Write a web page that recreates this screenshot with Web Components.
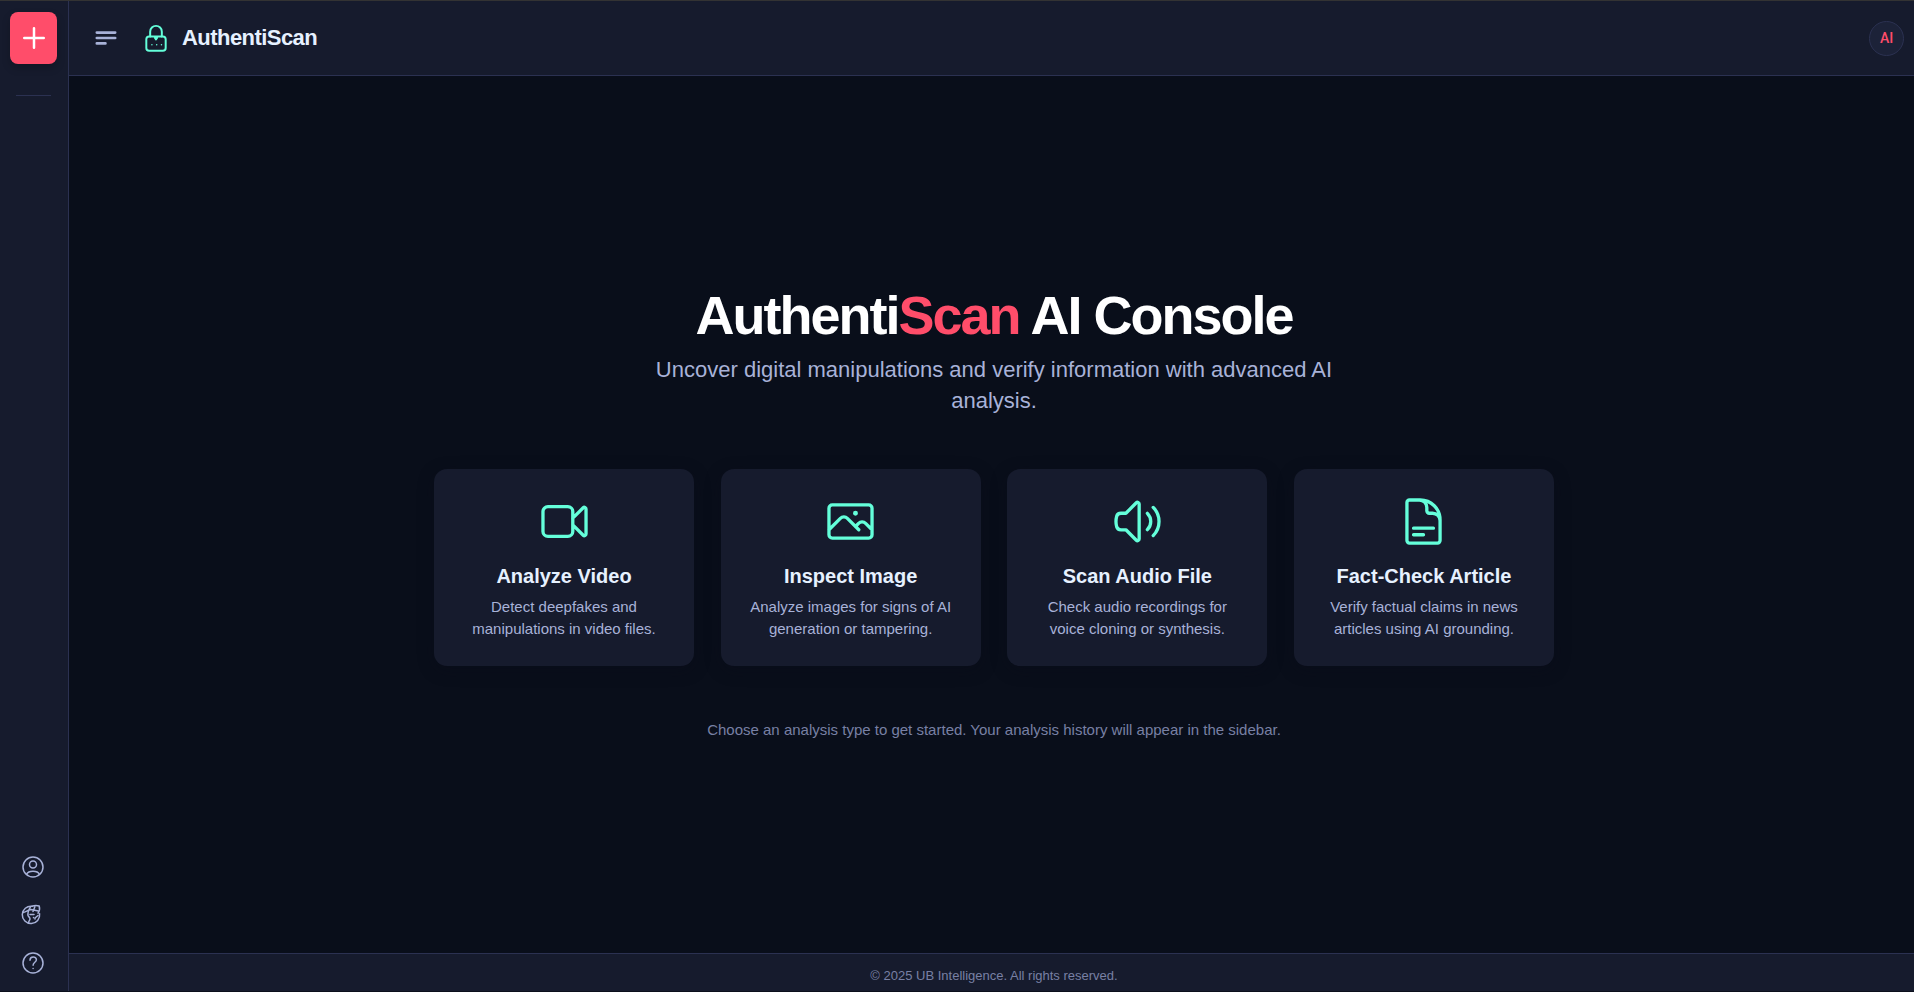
<!DOCTYPE html>
<html lang="en">
<head>
<meta charset="utf-8">
<title>AuthentiScan AI Console</title>
<style>
  html, body { height: 100%; }
  body {
    margin: 0;
    background: #090e1a;
    color: #e6f1ff;
    font-family: "Liberation Sans", Arial, sans-serif;
    --panel: #161b2d;
    --line: #2b3151;
    --mint: #64ffda;
    --red: #ff4d6a;
    --soft: #a8b2d8;
    --dim: #7880a4;
  }
</style>
</head>
<body>
<auth-app></auth-app>

<script>
class BaseElement extends HTMLElement {
  constructor() {
    super();
    this.attachShadow({ mode: "open" }).innerHTML = this.constructor.markup;
  }
}

const ICONS = {
  plus: `<path d="M12 4.200v15.600M4.200 12h15.600"/>`,
  menu: `<path d="M3.500 7h17M3.500 12h17M3.500 17h8"/>`,
  lock: `<rect x="3.700" y="10.700" width="16.600" height="12.200" rx="2.400"/><path d="M7 10.700V6.600a5 5 0 0 1 10 0V10.700M11 11.800h2L12 13.200z"/><path d="M8.500 17.700v.1M12.600 17.700v.1M16.700 17.700v.1" stroke-width="1.300"/>`,
  video: `<path d="m15.750 10.500 4.720-4.720a.75.75 0 0 1 1.280.53v11.380a.75.75 0 0 1-1.280.53l-4.720-4.720M4.500 18.750h9a2.250 2.250 0 0 0 2.250-2.250v-9a2.250 2.250 0 0 0-2.250-2.250h-9A2.250 2.250 0 0 0 2.250 7.500v9a2.250 2.250 0 0 0 2.250 2.250Z"/>`,
  image: `<path d="m2.250 15.750 5.159-5.159a2.250 2.250 0 0 1 3.182 0l5.159 5.159m-1.500-1.500 1.409-1.409a2.250 2.250 0 0 1 3.182 0l2.909 2.909m-18 3.750h16.500a1.500 1.500 0 0 0 1.500-1.500V6a1.500 1.500 0 0 0-1.500-1.500H3.750A1.500 1.500 0 0 0 2.250 6v12a1.500 1.500 0 0 0 1.500 1.500Zm10.500-11.250h.008v.008h-.008V8.250Zm.375 0a.375.375 0 1 1-.75 0 .375.375 0 0 1 .75 0Z"/>`,
  audio: `<path d="M19.114 5.636a9 9 0 0 1 0 12.728M16.463 8.288a5.250 5.250 0 0 1 0 7.424M6.750 8.250l4.720-4.720a.75.75 0 0 1 1.280.53v15.880a.75.75 0 0 1-1.280.53l-4.720-4.720H4.510c-.88 0-1.704-.507-1.938-1.354A9.009 9.009 0 0 1 2.250 12c0-.83.112-1.633.322-2.396C2.806 8.756 3.630 8.250 4.510 8.250H6.750Z"/>`,
  article: `<path d="M19.500 14.250v-2.625a3.375 3.375 0 0 0-3.375-3.375h-1.500A1.125 1.125 0 0 1 13.500 7.125v-1.500a3.375 3.375 0 0 0-3.375-3.375H8.250M7.500 15h9M7.500 18H12M10.500 2.250H5.625c-.621 0-1.125.504-1.125 1.125v17.250c0 .621.504 1.125 1.125 1.125h12.750c.621 0 1.125-.504 1.125-1.125V11.250a9 9 0 0 0-9-9Z"/>`,
  user: `<circle cx="12" cy="12" r="10"/><circle cx="12" cy="9.500" r="3.500"/><path d="M5.500 19.300c2-4 11-4 13 0"/>`,
  globe: `<path d="M11 3.200a8.700 8.700 0 1 0 7.600 7.500"/><path d="M11 3.200c2-.8 5-1 7.200-.2.600 2 .4 5-1.200 7.200M1.800 9.500c3 0 4.500-2.500 8-3L17.500 8M9.500 3.800C7.500 7 6.500 9 7 12.500c.5 1.500 2 1.500 2 3.500-.2 1.500-1.500 2-1.500 4M14 3.500l-2 5M9 11.500h4M12.500 14.500v.3M17 12.500l-3 2.500v1"/>`,
  help: `<circle cx="12" cy="12" r="10"/><path d="M9 9.300c0-4.400 6.400-4.400 6.400-.5 0 2.600-3.300 2.400-3.300 5.400M12.100 17.400v.2"/>`
};

customElements.define("auth-icon", class extends HTMLElement {
  constructor() {
    super();
    this.attachShadow({ mode: "open" });
  }
  connectedCallback() {
    this.shadowRoot.innerHTML = `
      <style>
        :host { display: block; width: 24px; height: 24px; flex: none; }
        svg { display: block; width: 100%; height: 100%; overflow: visible; fill: none;
          stroke: currentColor; stroke-width: var(--stroke, 1.5);
          stroke-linecap: round; stroke-linejoin: round; }
      </style>
      <svg viewBox="0 0 24 24" aria-hidden="true">${ICONS[this.getAttribute("name")]}</svg>`;
  }
});

customElements.define("auth-sidebar", class extends BaseElement {
  static markup = `
    <style>
      :host { display: flex; flex-direction: column; justify-content: space-between;
        box-sizing: border-box; width: 69px; padding: 11px 11px 12px 10px;
        background: var(--panel); border-right: 1px solid var(--line); }
      .top, nav { display: flex; flex-direction: column; align-items: center; }
      button { border: 0; padding: 0; background: none; color: var(--soft);
        display: grid; place-items: center; cursor: pointer; }
      .new { width: 47px; height: 52px; border-radius: 8px; background: var(--red); color: #fff;
        box-shadow: 0 4px 8px rgba(0, 0, 0, .2); --stroke: 2; }
      .new auth-icon { width: 30px; height: 30px; }
      hr { width: 35px; height: 1px; margin: 31px 0 0; border: 0; background: var(--line); }
      nav { gap: 16px; padding-right: 1px; }
      nav button { width: 32px; height: 32px; }
    </style>
    <div class="top">
      <button class="new" aria-label="New analysis"><auth-icon name="plus"></auth-icon></button>
      <hr>
    </div>
    <nav aria-label="Account">
      <button aria-label="Profile"><auth-icon name="user"></auth-icon></button>
      <button aria-label="Language"><auth-icon name="globe"></auth-icon></button>
      <button aria-label="Help"><auth-icon name="help"></auth-icon></button>
    </nav>`;
});

customElements.define("auth-header", class extends BaseElement {
  static markup = `
    <style>
      :host { display: flex; align-items: center; box-sizing: border-box; height: 75px;
        padding: 0 10px 0 24px; background: var(--panel); border-bottom: 1px solid var(--line); }
      button { border: 0; padding: 0; background: none; cursor: pointer; }
      .menu { color: var(--soft); --stroke: 2.4; }
      .menu auth-icon { width: 26px; height: 26px; }
      .logo { width: 28px; height: 28px; margin: 0 12px 0 23px; color: var(--mint); --stroke: 1.7; }
      span { font-size: 22px; line-height: 28px; font-weight: 700; letter-spacing: -0.025em; }
      .avatar { box-sizing: border-box; width: 35px; height: 35px; margin-left: auto;
        border: 1px solid var(--line); border-radius: 50%; background: #1c2238;
        color: var(--red); font: 500 14px/20px "Roboto", sans-serif; }
    </style>
    <button class="menu" aria-label="Toggle sidebar"><auth-icon name="menu"></auth-icon></button>
    <auth-icon class="logo" name="lock"></auth-icon>
    <span>AuthentiScan</span>
    <button class="avatar">AI</button>`;
});

customElements.define("auth-card", class extends BaseElement {
  static markup = `
    <style>
      :host { display: block; }
      button { display: flex; flex-direction: column; align-items: center; box-sizing: border-box;
        width: 100%; height: 100%; padding: 26px 24px; border: 0; border-radius: 13px;
        background: var(--panel); color: inherit; font-family: inherit; text-align: center;
        box-shadow: 0 4px 16px rgba(10, 12, 24, .4); cursor: pointer; }
      ::slotted(auth-icon) { width: 53px; height: 53px; color: var(--mint); }
      .title { margin-top: 15px; font-size: 20px; line-height: 26px; font-weight: 700; }
      .text { margin-top: 7px; font-size: 15px; line-height: 22px; color: var(--soft); }
    </style>
    <button>
      <slot name="icon"></slot>
      <span class="title"><slot name="title"></slot></span>
      <span class="text"><slot></slot></span>
    </button>`;
});

customElements.define("auth-welcome", class extends BaseElement {
  static markup = `
    <style>
      :host { display: flex; flex-direction: column; align-items: center; justify-content: center;
        text-align: center; }
      h1 { margin: 0; font-size: 54px; line-height: 60px; font-weight: 700; color: #fff;
        letter-spacing: -2px; }
      em { font-style: normal; color: var(--red); }
      .lead { max-width: 700px; margin: 9px 0 0; font-size: 22px; line-height: 31px; color: var(--soft); }
      .cards { display: grid; grid-template-columns: repeat(4, 260px); justify-content: space-between;
        width: 1120px; max-width: 100%; margin: 53px 0; }
      .hint { margin: 0; font-size: 15px; line-height: 22px; color: var(--dim); }
    </style>
    <h1>Authenti<em>Scan</em> AI Console</h1>
    <p class="lead">Uncover digital manipulations and verify information with advanced AI analysis.</p>
    <div class="cards">
      <auth-card><auth-icon slot="icon" name="video"></auth-icon><span slot="title">Analyze Video</span>Detect deepfakes and manipulations in video files.</auth-card>
      <auth-card><auth-icon slot="icon" name="image"></auth-icon><span slot="title">Inspect Image</span>Analyze images for signs of AI generation or tampering.</auth-card>
      <auth-card><auth-icon slot="icon" name="audio"></auth-icon><span slot="title">Scan Audio File</span>Check audio recordings for voice cloning or synthesis.</auth-card>
      <auth-card><auth-icon slot="icon" name="article"></auth-icon><span slot="title">Fact-Check Article</span>Verify factual claims in news articles using AI grounding.</auth-card>
    </div>
    <p class="hint">Choose an analysis type to get started. Your analysis history will appear in the sidebar.</p>`;
});

customElements.define("auth-app", class extends BaseElement {
  static markup = `
    <style>
      :host { display: grid; grid-template-columns: auto 1fr; box-sizing: border-box;
        min-height: 100%; border-top: 1px solid #333; border-bottom: 1px solid #0b0f1c; }
      .page { display: grid; grid-template-rows: auto 1fr auto; min-width: 0; }
      main { display: grid; padding: 0 0 3px 5px; }
      footer { padding: 12px 0 5px 5px; background: var(--panel); border-top: 1px solid var(--line);
        text-align: center; font-size: 13px; line-height: 20px; color: var(--dim); }
    </style>
    <auth-sidebar></auth-sidebar>
    <div class="page">
      <auth-header></auth-header>
      <main><auth-welcome></auth-welcome></main>
      <footer>© 2025 UB Intelligence. All rights reserved.</footer>
    </div>`;
});
</script>
</body>
</html>
